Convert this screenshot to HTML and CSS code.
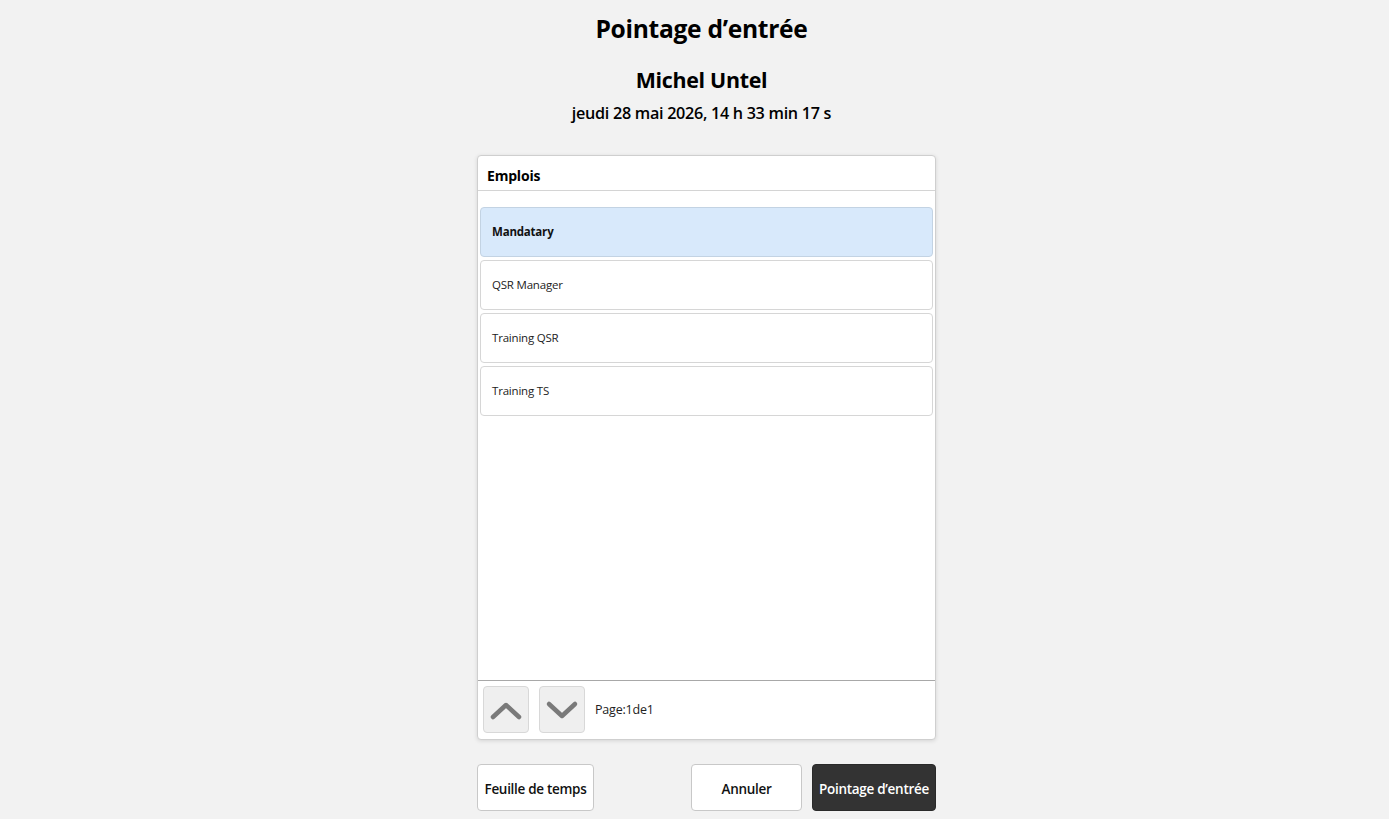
FILE: index.html
```html
<!DOCTYPE html>
<html lang="fr">
<head>
<meta charset="utf-8">
<title>Pointage d’entrée</title>
<link rel="stylesheet" href="styles.css">
</head>
<body>
<div class="page">
  <div class="heading">
    <h1 class="title">Pointage d’entrée</h1>
    <h2 class="name">Michel Untel</h2>
    <div class="date">jeudi 28 mai 2026, 14 h 33 min 17 s</div>
  </div>

  <div class="card">
    <div class="card-header">Emplois</div>
    <div class="list">
      <div class="item selected">Mandatary</div>
      <div class="item">QSR Manager</div>
      <div class="item">Training QSR</div>
      <div class="item">Training TS</div>
    </div>
    <div class="card-footer">
      <button class="nav-btn" aria-label="Page précédente">
        <svg width="34" height="34" viewBox="0 0 34 34"><path d="M4 24 L17 12 L30 24" fill="none" stroke="#7a7a7a" stroke-width="4.5" stroke-linecap="round" stroke-linejoin="round"/></svg>
      </button>
      <button class="nav-btn" aria-label="Page suivante">
        <svg width="34" height="34" viewBox="0 0 34 34"><path d="M4 11 L17 23 L30 11" fill="none" stroke="#7a7a7a" stroke-width="4.5" stroke-linecap="round" stroke-linejoin="round"/></svg>
      </button>
      <span class="page-info">Page:1de1</span>
    </div>
  </div>

  <div class="actions">
    <button class="btn btn-light btn-sheet">Feuille de temps</button>
    <div class="actions-right">
      <button class="btn btn-light btn-cancel">Annuler</button>
      <button class="btn btn-dark">Pointage d’entrée</button>
    </div>
  </div>
</div>
</body>
</html>
```

FILE: styles.css
```css
html, body {
  margin: 0;
  padding: 0;
  background: #f2f2f2;
  font-family: "Open Sans", "Noto Sans", "Liberation Sans", sans-serif;
  color: #000;
}

.page {
  width: 459px;
  margin: 0 auto;
  padding: 11px 0 0 24px;
  display: flex;
  flex-direction: column;
  align-items: stretch;
}

.heading {
  padding-right: 10px;
  text-align: center;
}

.title {
  margin: 0;
  font-size: 24.6px;
  line-height: 36px;
  font-weight: 700;
  letter-spacing: -0.3px;
}

.name {
  margin: 19px 0 0;
  font-size: 21.4px;
  line-height: 28px;
  font-weight: 700;
  letter-spacing: -0.3px;
}

.date {
  margin-top: 7px;
  font-size: 16.2px;
  line-height: 24px;
  font-weight: 600;
  letter-spacing: -0.3px;
}

.card {
  margin-top: 30px;
  height: 585px;
  box-sizing: border-box;
  background: #fff;
  border: 1px solid #cfcfcf;
  border-radius: 4px;
  box-shadow: 0 1px 4px rgba(0,0,0,0.12);
  display: flex;
  flex-direction: column;
}

.card-header {
  height: 34px;
  border-bottom: 1px solid #d4d4d4;
  padding-left: 9px;
  font-size: 14px;
  font-weight: 700;
  line-height: 40px;
  letter-spacing: -0.2px;
  box-sizing: content-box;
}

.list {
  flex: 1;
  padding: 16px 2px 0;
  display: flex;
  flex-direction: column;
  gap: 3px;
}

.item {
  height: 50px;
  box-sizing: border-box;
  border: 1px solid #d6d6d6;
  border-radius: 4px;
  padding: 0 0 1px 11px;
  display: flex;
  align-items: center;
  font-size: 11.5px;
  color: #222;
  letter-spacing: -0.2px;
}

.item.selected {
  background: #d8e9fb;
  border-color: #c3d3e3;
  font-weight: 700;
  color: #111;
}

.card-footer {
  height: 53px;
  border-top: 1px solid #a8a8a8;
  display: flex;
  align-items: flex-start;
  padding: 5px 5px 0;
  gap: 10px;
  box-sizing: content-box;
}

.nav-btn {
  width: 46px;
  height: 47px;
  padding: 0;
  margin: 0;
  background: #efefef;
  border: 1px solid #d8d8d8;
  border-radius: 4px;
  display: flex;
  align-items: center;
  justify-content: center;
}

.page-info {
  font-size: 12.5px;
  line-height: 47px;
  color: #222;
  letter-spacing: -0.2px;
}

.actions {
  margin-top: 24px;
  display: flex;
  justify-content: space-between;
}

.actions-right {
  display: flex;
  gap: 10px;
}

.btn {
  height: 47px;
  margin: 0;
  border-radius: 4px;
  font-family: inherit;
  font-size: 13.5px;
  font-weight: 600;
  letter-spacing: -0.3px;
  padding: 0 0 0;
  line-height: 49px;
}

.btn-light {
  background: #fff;
  border: 1px solid #c8c8c8;
  color: #111;
}

.btn-sheet { width: 117px; }
.btn-cancel { width: 111px; }

.btn-dark {
  width: 124px;
  background: #333;
  border: 1px solid #2a2a2a;
  color: #fff;
}
```
